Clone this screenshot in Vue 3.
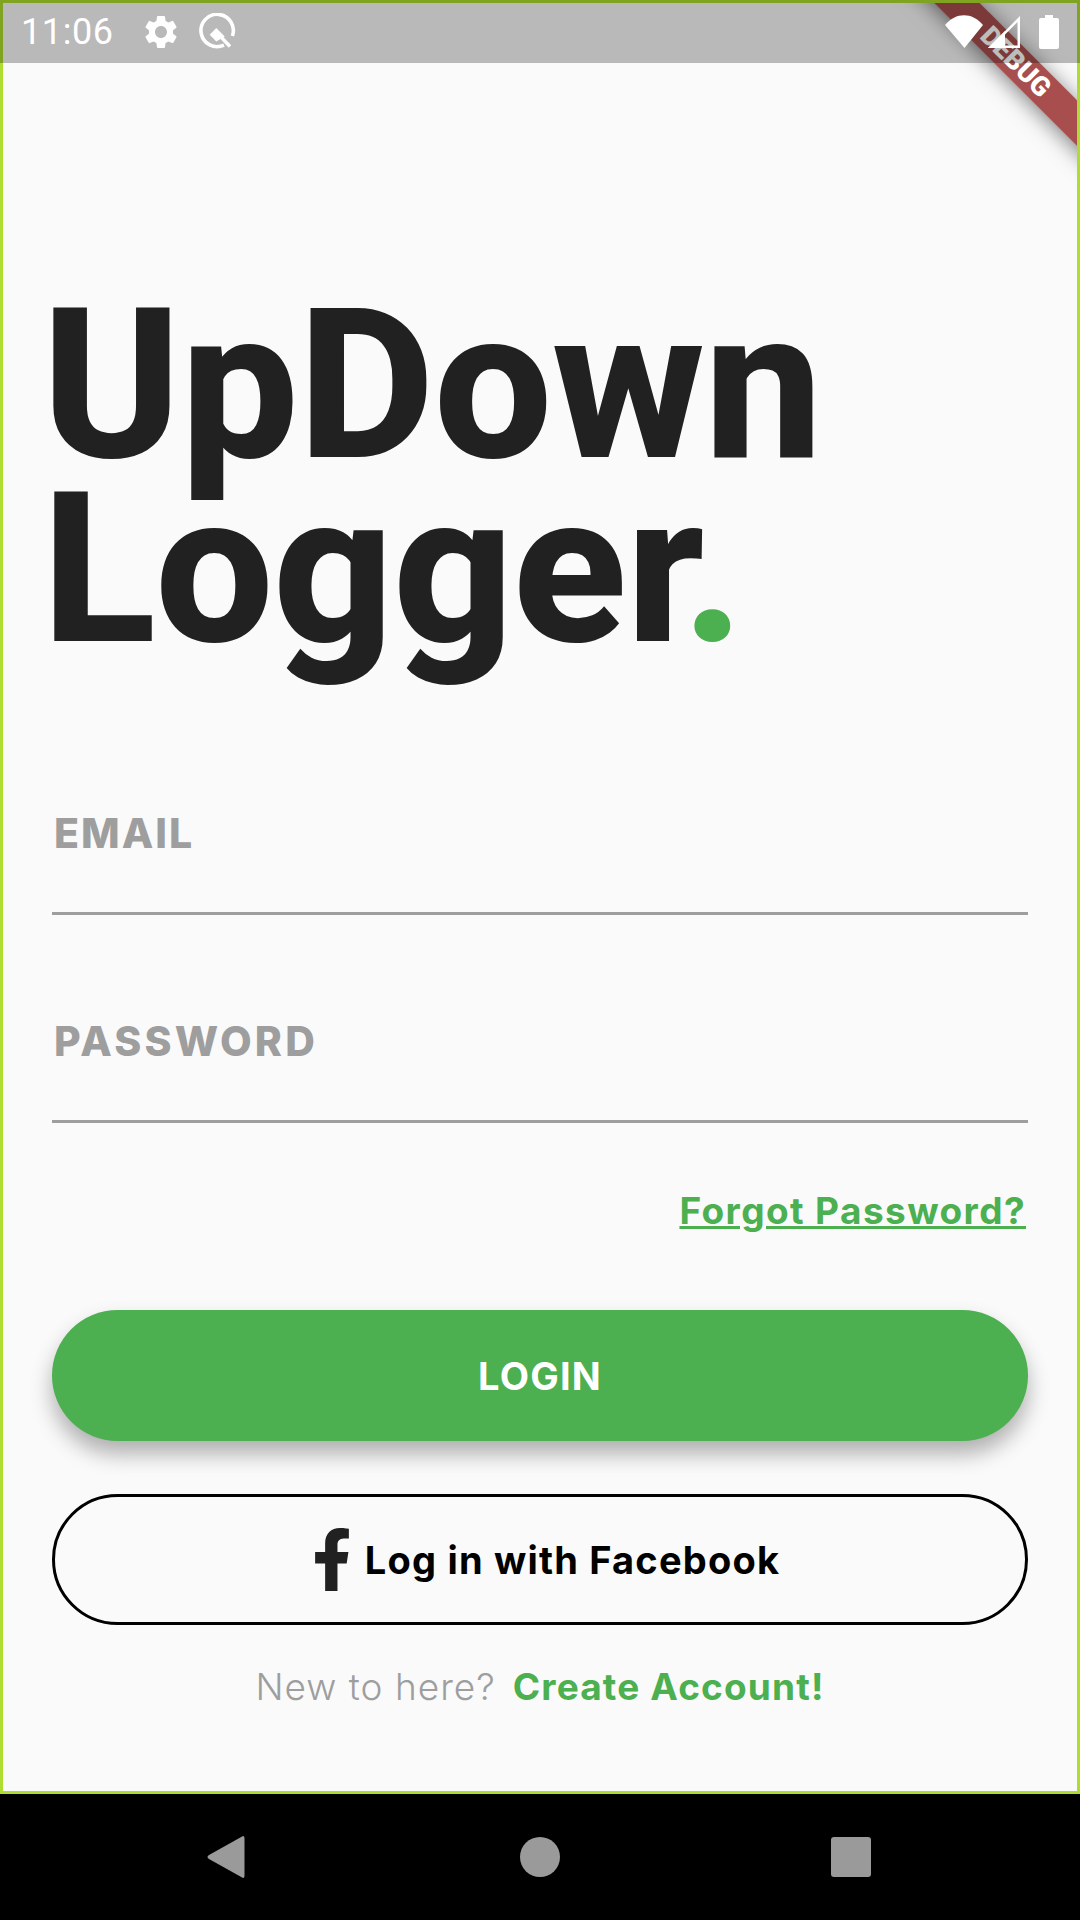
<script setup>
const fields = ["EMAIL", "PASSWORD"];
</script>

<template>
  <div class="device">
    <div class="screen">
      <main class="login">
        <h1 class="title">UpDown<br />Logger<span class="dot">.</span></h1>

        <label v-for="field in fields" :key="field" class="field">
          <span>{{ field }}</span>
        </label>

        <a class="forgot">Forgot Password?</a>

        <button class="btn btn-login">LOGIN</button>
        <button class="btn btn-facebook">
          <svg class="fb" viewBox="0 0 320 512">
            <path fill="#212121" d="M279.14 288l14.22-92.66h-88.91v-60.13c0-25.35 12.42-50.06 52.24-50.06h40.42V6.26S260.43 0 225.36 0c-73.22 0-121.08 44.38-121.08 124.72v70.62H22.89V288h81.39v224h100.17V288z" />
          </svg>
          <span>Log in with Facebook</span>
        </button>

        <p class="signup">
          <span class="new">New to here?</span>
          <a class="create">Create Account!</a>
        </p>
      </main>

      <div class="banner-clip">
        <div class="banner">DEBUG</div>
      </div>
    </div>

    <!-- translucent status bar sits over the app and the debug banner -->
    <header class="status">
      <span class="time">11:06</span>
      <svg class="gear" viewBox="0 0 24 24">
        <path fill="#fff" d="M19.14 12.94c.04-.3.06-.61.06-.94 0-.32-.02-.64-.07-.94l2.03-1.58c.18-.14.23-.41.12-.61l-1.92-3.32c-.12-.22-.37-.29-.59-.22l-2.39.96c-.5-.38-1.03-.7-1.62-.94l-.36-2.54c-.04-.24-.24-.41-.48-.41h-3.84c-.24 0-.43.17-.47.41l-.36 2.54c-.59.24-1.13.57-1.62.94l-2.39-.96c-.22-.08-.47 0-.59.22L2.74 8.87c-.12.21-.08.47.12.61l2.03 1.58c-.05.3-.09.63-.09.94s.02.64.07.94l-2.03 1.58c-.18.14-.23.41-.12.61l1.92 3.32c.12.22.37.29.59.22l2.39-.96c.5.38 1.03.7 1.62.94l.36 2.54c.05.24.24.41.48.41h3.84c.24 0 .44-.17.47-.41l.36-2.54c.59-.24 1.13-.56 1.62-.94l2.39.96c.22.08.47 0 .59-.22l1.92-3.32c.12-.22.07-.47-.12-.61l-2.01-1.58zM12 15.6c-1.98 0-3.6-1.62-3.6-3.6s1.62-3.6 3.6-3.6 3.6 1.62 3.6 3.6-1.62 3.6-3.6 3.6z" />
      </svg>
      <svg class="q" viewBox="0 0 38 38">
        <path fill="none" stroke="#fff" stroke-width="3.6" d="M33.4 23 A16.2 16.2 0 1 0 25 32.2" />
        <path fill="none" stroke="#fff" stroke-width="3.4" d="M22 24 L31 33.5" />
        <path fill="#fff" d="M17.3 15 L25.7 23.4 L17.3 28.4 L10.7 21.7 Z" />
      </svg>
      <span class="spacer"></span>
      <svg class="wifi" viewBox="0 0 38 33">
        <path fill="#fff" d="M19.5 33 L0 10 C11 -3 27 -3 38 10 Z" />
      </svg>
      <svg class="signal" viewBox="0 0 32 32">
        <path fill="#fff" d="M0 32 L17 15 V32 Z" />
        <path fill="none" stroke="#fff" stroke-width="2.5" d="M3 30.8 L30.8 3 V30.8 Z" />
      </svg>
      <svg class="battery" viewBox="0 0 20 34">
        <path fill="#fff" d="M6 0 H14 V3 H18 Q20 3 20 5 V32 Q20 34 18 34 H2 Q0 34 0 32 V5 Q0 3 2 3 H6 Z" />
      </svg>
    </header>

    <nav class="navbar">
      <svg class="nav-back" viewBox="0 0 40 42">
        <path fill="#9a9a9a" d="M37 0 Q38.5 0 38.5 2 V40 Q38.5 42 37 42 L3 23 Q0 21 3 19 Z" />
      </svg>
      <span class="nav-home"></span>
      <span class="nav-recent"></span>
    </nav>
  </div>
</template>

<style>
body {
  margin: 0;
  background: #000;
}
</style>

<style scoped>
.device {
  position: relative;
  width: 1080px;
  height: 1920px;
  display: flex;
  flex-direction: column;
  background: #000;
  overflow: hidden;
}

.screen {
  position: relative;
  height: 1794px;
  box-sizing: border-box;
  border: 3px solid #aedc2f;
  background: #fafafa;
}

.login {
  display: flex;
  flex-direction: column;
  padding: 0 49px;
}

.title {
  margin: 290px 0 0 -10px;
  font-family: Roboto, sans-serif;
  font-weight: 800;
  font-size: 210px;
  line-height: 184px;
  color: #212121;
  letter-spacing: -0.5px;
}

.dot {
  margin-left: -22px;
  color: #4caf50;
}

.field {
  display: flex;
  align-items: flex-end;
  height: 208px;
  box-sizing: border-box;
  padding: 0 0 54px 2px;
  font-family: Inter, sans-serif;
  font-weight: 800;
  font-size: 41px;
  line-height: 50px;
  letter-spacing: 2px;
  color: #9e9e9e;
  border-bottom: 3px solid #9e9e9e;
}

.field:first-of-type {
  margin-top: 46px;
}

.field:nth-of-type(2) {
  letter-spacing: 3.2px;
}

.forgot {
  align-self: flex-end;
  margin: 64px 2px 0 0;
  font-family: Inter, sans-serif;
  font-weight: 700;
  font-size: 37px;
  line-height: 48px;
  letter-spacing: 1.4px;
  color: #4caf50;
  text-decoration: underline;
}

.btn {
  display: flex;
  align-items: center;
  justify-content: center;
  height: 131px;
  padding: 0;
  border-radius: 66px;
  font-family: Inter, sans-serif;
  font-weight: 700;
  font-size: 38px;
  letter-spacing: 1.2px;
}

.btn-login {
  margin-top: 75px;
  border: none;
  background: #4caf50;
  color: #fff;
  box-shadow: 0 13px 21px rgba(0, 0, 0, 0.3);
}

.btn-facebook {
  margin-top: 53px;
  padding-left: 12px;
  border: 3px solid #000;
  background: transparent;
  color: #000;
  gap: 13px;
}

.fb {
  width: 40px;
  height: 63px;
}

.signup {
  display: flex;
  justify-content: center;
  gap: 17px;
  margin: 38px 0 0;
  font-family: Inter, sans-serif;
  font-size: 37px;
  line-height: 48px;
}

.new {
  font-weight: 300;
  letter-spacing: 1px;
  color: #9e9e9e;
}

.create {
  font-weight: 700;
  letter-spacing: 1.15px;
  color: #4caf50;
}

.banner-clip {
  position: absolute;
  inset: 0;
  overflow: hidden;
  pointer-events: none;
}

.banner {
  position: absolute;
  left: 817px;
  top: 47px;
  width: 400px;
  height: 32px;
  padding-right: 12px;
  box-sizing: border-box;
  transform: rotate(45deg);
  background: rgba(140, 20, 20, 0.75);
  box-shadow: 0 3px 21px rgba(0, 0, 0, 0.5);
  color: #fff;
  font-family: Roboto, sans-serif;
  font-weight: 900;
  font-size: 27px;
  line-height: 32px;
  text-align: center;
}

.status {
  position: absolute;
  top: 0;
  left: 0;
  right: 0;
  height: 63px;
  display: flex;
  align-items: center;
  padding: 0 21px;
  box-sizing: border-box;
  background: rgba(0, 0, 0, 0.26);
}

.time {
  font-family: Roboto, sans-serif;
  font-size: 36px;
  letter-spacing: 0.6px;
  color: #fff;
  width: 120px;
}

.gear {
  width: 40px;
  height: 40px;
}

.q {
  width: 38px;
  height: 38px;
  margin-left: 18px;
}

.spacer {
  flex: 1;
}

.wifi {
  width: 38px;
  height: 33px;
}

.signal {
  width: 32px;
  height: 32px;
  margin-left: 5px;
}

.battery {
  width: 20px;
  height: 34px;
  margin-left: 19px;
}

.navbar {
  flex: 1;
  display: flex;
  align-items: center;
  padding-left: 206px;
}

.nav-back {
  width: 40px;
  height: 42px;
}

.nav-home {
  width: 40px;
  height: 40px;
  margin-left: 274px;
  border-radius: 50%;
  background: #9a9a9a;
}

.nav-recent {
  width: 40px;
  height: 40px;
  margin-left: 271px;
  border-radius: 3px;
  background: #9a9a9a;
}
</style>
